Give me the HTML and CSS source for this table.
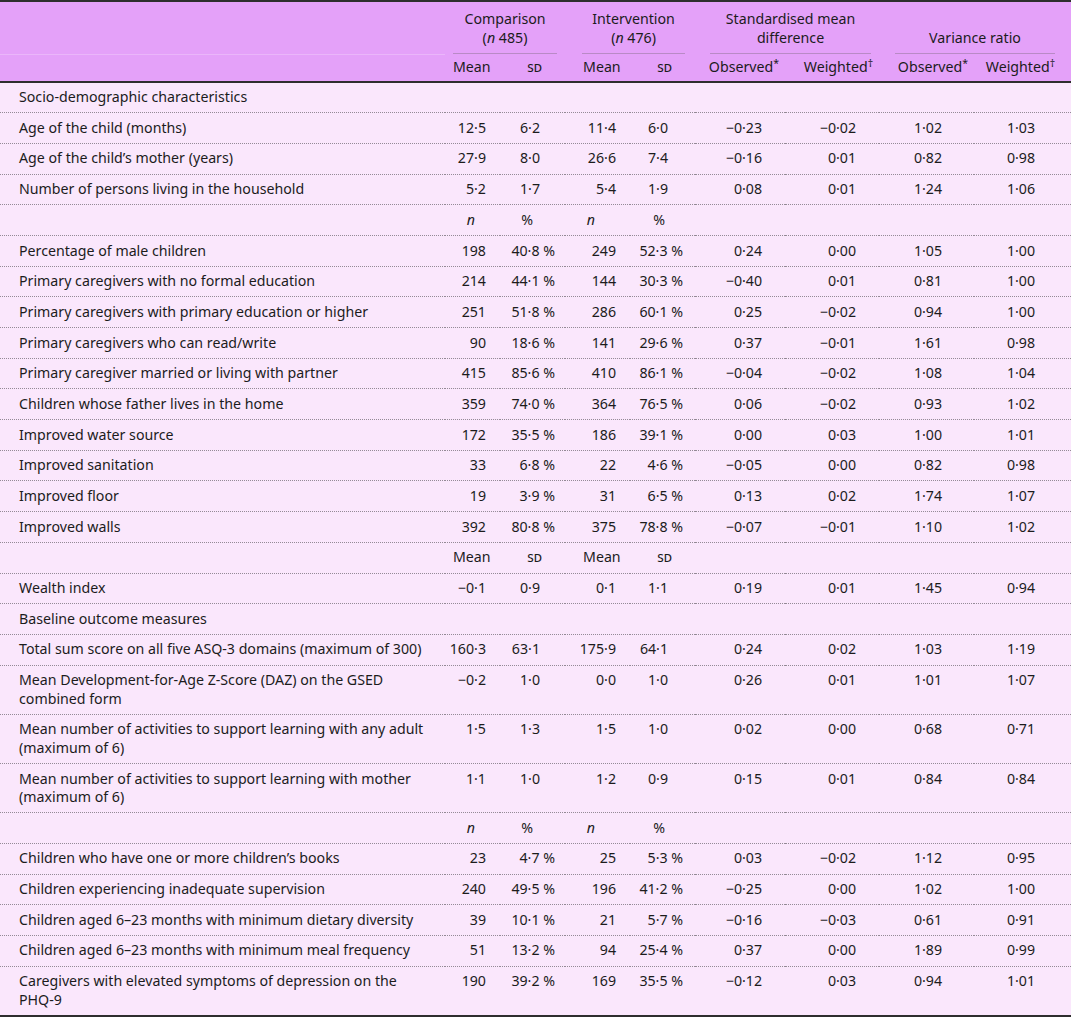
FILE: index.html
```html
<!DOCTYPE html>
<html lang="en">
<head>
	<meta charset="UTF-8">
	<title>Balance of covariates</title>
	<link rel="stylesheet" href="styles.css">
</head>
<body>
<table class="balance">
	<colgroup>
		<col class="c-label">
		<col class="c-cm"><col class="c-cs">
		<col class="c-im"><col class="c-is">
		<col class="c-so"><col class="c-sw">
		<col class="c-vo"><col class="c-vw">
	</colgroup>
	<thead>
		<tr class="grp">
			<th class="blank"></th>
			<th colspan="2"><div class="under u-comp">Comparison<br>(<i>n</i> 485)</div></th>
			<th colspan="2"><div class="under u-int">Intervention<br>(<i>n</i> 476)</div></th>
			<th colspan="2"><div class="under u-smd">Standardised mean<br>difference</div></th>
			<th colspan="2"><div class="under u-var">Variance ratio</div></th>
		</tr>
		<tr class="sub">
			<th></th>
			<th class="cm h-left">Mean</th>
			<th class="cs h-sd"><span class="sc">sd</span></th>
			<th class="im h-left">Mean</th>
			<th class="is h-sd"><span class="sc">sd</span></th>
			<th class="so">Observed<sup>*</sup></th>
			<th class="sw">Weighted<sup>†</sup></th>
			<th class="vo">Observed<sup>*</sup></th>
			<th class="vw">Weighted<sup>†</sup></th>
		</tr>
	</thead>
	<tbody>
		<tr class="section"><td>Socio-demographic characteristics</td><td></td><td></td><td></td><td></td><td></td><td></td><td></td><td></td></tr>
		<tr><td>Age of the child (months)</td><td class="cm">12·5</td><td class="cs sd">6·2</td><td class="im">11·4</td><td class="is sd">6·0</td><td class="so">−0·23</td><td class="sw">−0·02</td><td class="vo">1·02</td><td class="vw">1·03</td></tr>
		<tr><td>Age of the child’s mother (years)</td><td class="cm">27·9</td><td class="cs sd">8·0</td><td class="im">26·6</td><td class="is sd">7·4</td><td class="so">−0·16</td><td class="sw">0·01</td><td class="vo">0·82</td><td class="vw">0·98</td></tr>
		<tr><td>Number of persons living in the household</td><td class="cm">5·2</td><td class="cs sd">1·7</td><td class="im">5·4</td><td class="is sd">1·9</td><td class="so">0·08</td><td class="sw">0·01</td><td class="vo">1·24</td><td class="vw">1·06</td></tr>
		<tr class="subhead"><td></td><td class="cm n-h"><i>n</i></td><td class="cs pc-h">%</td><td class="im n-h"><i>n</i></td><td class="is pc-h">%</td><td></td><td></td><td></td><td></td></tr>
		<tr><td>Percentage of male children</td><td class="cm">198</td><td class="cs">40·8 %</td><td class="im">249</td><td class="is">52·3 %</td><td class="so">0·24</td><td class="sw">0·00</td><td class="vo">1·05</td><td class="vw">1·00</td></tr>
		<tr><td>Primary caregivers with no formal education</td><td class="cm">214</td><td class="cs">44·1 %</td><td class="im">144</td><td class="is">30·3 %</td><td class="so">−0·40</td><td class="sw">0·01</td><td class="vo">0·81</td><td class="vw">1·00</td></tr>
		<tr><td>Primary caregivers with primary education or higher</td><td class="cm">251</td><td class="cs">51·8 %</td><td class="im">286</td><td class="is">60·1 %</td><td class="so">0·25</td><td class="sw">−0·02</td><td class="vo">0·94</td><td class="vw">1·00</td></tr>
		<tr><td>Primary caregivers who can read/write</td><td class="cm">90</td><td class="cs">18·6 %</td><td class="im">141</td><td class="is">29·6 %</td><td class="so">0·37</td><td class="sw">−0·01</td><td class="vo">1·61</td><td class="vw">0·98</td></tr>
		<tr><td>Primary caregiver married or living with partner</td><td class="cm">415</td><td class="cs">85·6 %</td><td class="im">410</td><td class="is">86·1 %</td><td class="so">−0·04</td><td class="sw">−0·02</td><td class="vo">1·08</td><td class="vw">1·04</td></tr>
		<tr><td>Children whose father lives in the home</td><td class="cm">359</td><td class="cs">74·0 %</td><td class="im">364</td><td class="is">76·5 %</td><td class="so">0·06</td><td class="sw">−0·02</td><td class="vo">0·93</td><td class="vw">1·02</td></tr>
		<tr><td>Improved water source</td><td class="cm">172</td><td class="cs">35·5 %</td><td class="im">186</td><td class="is">39·1 %</td><td class="so">0·00</td><td class="sw">0·03</td><td class="vo">1·00</td><td class="vw">1·01</td></tr>
		<tr><td>Improved sanitation</td><td class="cm">33</td><td class="cs">6·8 %</td><td class="im">22</td><td class="is">4·6 %</td><td class="so">−0·05</td><td class="sw">0·00</td><td class="vo">0·82</td><td class="vw">0·98</td></tr>
		<tr><td>Improved floor</td><td class="cm">19</td><td class="cs">3·9 %</td><td class="im">31</td><td class="is">6·5 %</td><td class="so">0·13</td><td class="sw">0·02</td><td class="vo">1·74</td><td class="vw">1·07</td></tr>
		<tr><td>Improved walls</td><td class="cm">392</td><td class="cs">80·8 %</td><td class="im">375</td><td class="is">78·8 %</td><td class="so">−0·07</td><td class="sw">−0·01</td><td class="vo">1·10</td><td class="vw">1·02</td></tr>
		<tr class="subhead"><td></td><td class="cm">Mean</td><td class="cs sd-h"><span class="sc">sd</span></td><td class="im">Mean</td><td class="is sd-h"><span class="sc">sd</span></td><td></td><td></td><td></td><td></td></tr>
		<tr><td>Wealth index</td><td class="cm">−0·1</td><td class="cs sd">0·9</td><td class="im">0·1</td><td class="is sd">1·1</td><td class="so">0·19</td><td class="sw">0·01</td><td class="vo">1·45</td><td class="vw">0·94</td></tr>
		<tr class="section"><td>Baseline outcome measures</td><td></td><td></td><td></td><td></td><td></td><td></td><td></td><td></td></tr>
		<tr><td>Total sum score on all five ASQ-3 domains (maximum of 300)</td><td class="cm">160·3</td><td class="cs sd">63·1</td><td class="im">175·9</td><td class="is sd">64·1</td><td class="so">0·24</td><td class="sw">0·02</td><td class="vo">1·03</td><td class="vw">1·19</td></tr>
		<tr><td>Mean Development-for-Age Z-Score (DAZ) on the GSED<br>combined form</td><td class="cm">−0·2</td><td class="cs sd">1·0</td><td class="im">0·0</td><td class="is sd">1·0</td><td class="so">0·26</td><td class="sw">0·01</td><td class="vo">1·01</td><td class="vw">1·07</td></tr>
		<tr><td>Mean number of activities to support learning with any adult<br>(maximum of 6)</td><td class="cm">1·5</td><td class="cs sd">1·3</td><td class="im">1·5</td><td class="is sd">1·0</td><td class="so">0·02</td><td class="sw">0·00</td><td class="vo">0·68</td><td class="vw">0·71</td></tr>
		<tr><td>Mean number of activities to support learning with mother<br>(maximum of 6)</td><td class="cm">1·1</td><td class="cs sd">1·0</td><td class="im">1·2</td><td class="is sd">0·9</td><td class="so">0·15</td><td class="sw">0·01</td><td class="vo">0·84</td><td class="vw">0·84</td></tr>
		<tr class="subhead"><td></td><td class="cm n-h"><i>n</i></td><td class="cs pc-h">%</td><td class="im n-h"><i>n</i></td><td class="is pc-h">%</td><td></td><td></td><td></td><td></td></tr>
		<tr><td>Children who have one or more children’s books</td><td class="cm">23</td><td class="cs">4·7 %</td><td class="im">25</td><td class="is">5·3 %</td><td class="so">0·03</td><td class="sw">−0·02</td><td class="vo">1·12</td><td class="vw">0·95</td></tr>
		<tr><td>Children experiencing inadequate supervision</td><td class="cm">240</td><td class="cs">49·5 %</td><td class="im">196</td><td class="is">41·2 %</td><td class="so">−0·25</td><td class="sw">0·00</td><td class="vo">1·02</td><td class="vw">1·00</td></tr>
		<tr><td>Children aged 6–23 months with minimum dietary diversity</td><td class="cm">39</td><td class="cs">10·1 %</td><td class="im">21</td><td class="is">5·7 %</td><td class="so">−0·16</td><td class="sw">−0·03</td><td class="vo">0·61</td><td class="vw">0·91</td></tr>
		<tr><td>Children aged 6–23 months with minimum meal frequency</td><td class="cm">51</td><td class="cs">13·2 %</td><td class="im">94</td><td class="is">25·4 %</td><td class="so">0·37</td><td class="sw">0·00</td><td class="vo">1·89</td><td class="vw">0·99</td></tr>
		<tr class="last"><td>Caregivers with elevated symptoms of depression on the<br>PHQ-9</td><td class="cm">190</td><td class="cs">39·2 %</td><td class="im">169</td><td class="is">35·5 %</td><td class="so">−0·12</td><td class="sw">0·03</td><td class="vo">0·94</td><td class="vw">1·01</td></tr>
	</tbody>
</table>
</body>
</html>
```

FILE: styles.css
```css
:root {
	--head-bg:	#e4a1f9;
	--body-bg:	#fae7fc;
	--rule:		#2e2e2e;
	--dots:		#948a96;
	--ink:		#1c1c1c;
}

* {
	margin:		0;
	padding:	0;
	box-sizing:	border-box;
}

body {
	background:	#ffffff;
	font-family:	"Noto Sans", "Open Sans", sans-serif;
	font-size:	14.2px;
	line-height:	18.5px;
	color:		var(--ink);
}

.balance {
	width:		1071px;
	table-layout:	fixed;
	border-collapse: collapse;
	border-top:	2px solid var(--rule);
	border-bottom:	2px solid var(--rule);
}

.c-label	{ width: 445px; }
.c-cm		{ width: 55px; }
.c-cs		{ width: 65px; }
.c-im		{ width: 65px; }
.c-is		{ width: 65px; }
.c-so		{ width: 90px; }
.c-sw		{ width: 94px; }
.c-vo		{ width: 95px; }
.c-vw		{ width: 97px; }

thead {
	background:	var(--head-bg);
}

thead th {
	font-weight:	normal;
	vertical-align:	bottom;
}

.grp th {
	padding-top:	8px;
}

.grp .blank {
	border-bottom:	1px solid #eab6fa;
}

.under {
	text-align:	center;
	padding-bottom:	6px;
	border-bottom:	1px solid #b98ac6;
}

.u-comp	{ margin: 0 8px 0 8px; }
.u-int	{ margin: 0 10px 0 17px; }
.u-smd	{ margin: 0 8px 0 15px; }
.u-var	{ margin: 0 16px 0 16px; }

.sub th {
	padding-top:	4px;
	padding-bottom:	4px;
	text-align:	right;
	border-bottom:	2px solid var(--rule);
}

.sub .h-left {
	text-align:	left;
}

.sub .cm { padding-left: 8px; }
.sub .im { padding-left: 18px; }
.sub .cs, .sub .is { padding-right: 23px; }
.sub .so, .sub .sw, .sub .vo { padding-right: 6px; }
.sub .vw { padding-right: 16px; }

sup {
	font-size:	10.5px;
	line-height:	0;
	vertical-align:	5px;
}

.sc {
	font-variant:	small-caps;
}

tbody {
	background:	var(--body-bg);
}

tbody td {
	padding-top:	5.6px;
	padding-bottom:	5.6px;
	vertical-align:	top;
	text-align:	right;
	border-bottom:	1px dotted var(--dots);
}

tbody td:first-child {
	text-align:	left;
	padding-left:	19px;
}

tbody tr.last td {
	padding-bottom:	5.4px;
	border-bottom:	none;
}

/* numeric columns: right edges follow the printed table */
tbody .cm { padding-right: 14px; }
tbody .cs { padding-right: 10px; }
tbody .im { padding-right: 14px; }
tbody .is { padding-right: 12px; }
tbody .sd { padding-right: 25px; }
tbody .is.sd { padding-right: 27px; }
tbody .so { padding-right: 23px; }
tbody .sw { padding-right: 23px; }
tbody .vo { padding-right: 32px; }
tbody .vw { padding-right: 36px; }

.subhead .cm, .subhead .im {
	text-align:	left;
}

.subhead .cm { padding-left: 8px; }
.subhead .im { padding-left: 18px; }

.subhead .n-h { text-align: right; }
.subhead .cm.n-h { padding-right: 25px; }
.subhead .im.n-h { padding-right: 35px; }

.subhead .pc-h { padding-right: 32px; }
.subhead .is.pc-h { padding-right: 30px; }
.subhead .sd-h { padding-right: 23px; }
```
